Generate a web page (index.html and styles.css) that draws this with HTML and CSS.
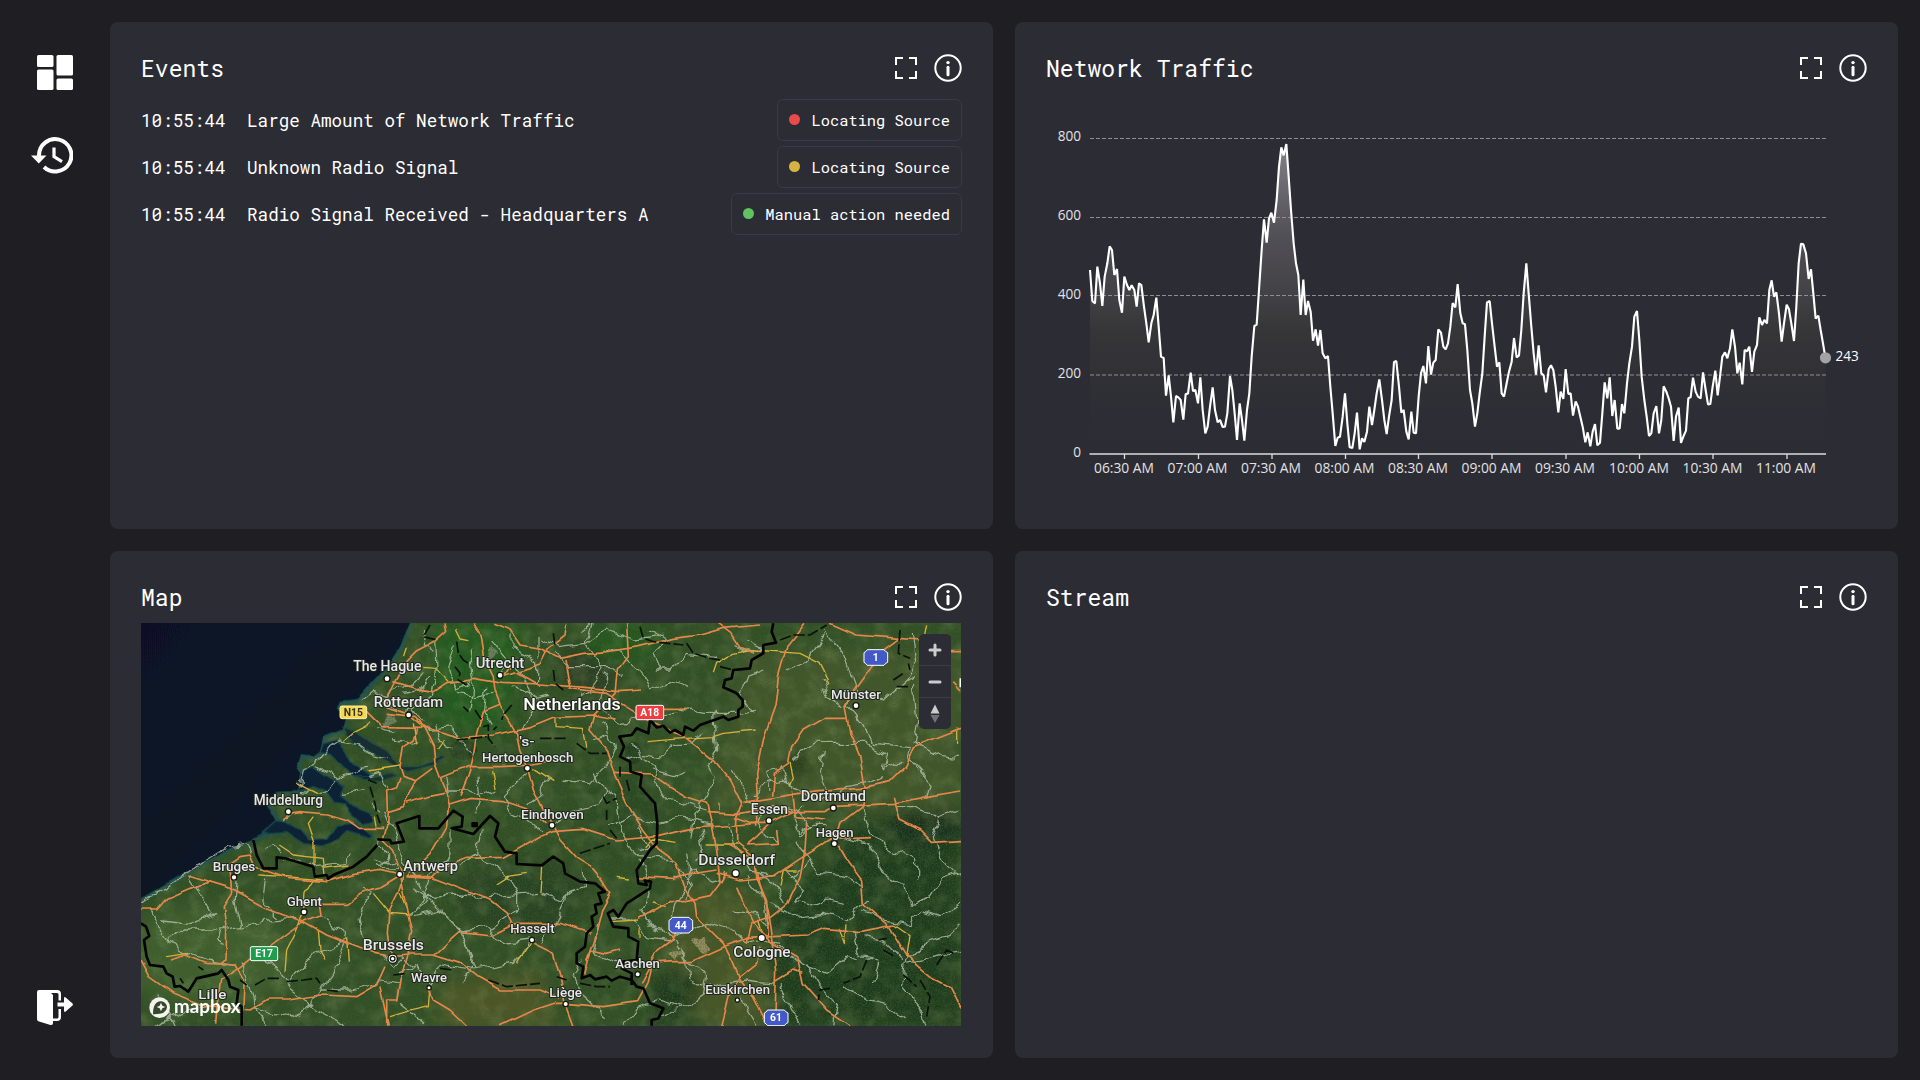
FILE: index.html
```html
<!DOCTYPE html>
<html lang="en">
<head>
<meta charset="utf-8">
<title>Dashboard</title>
<link rel="stylesheet" href="styles.css">
</head>
<body>
<svg class="defs" width="0" height="0" aria-hidden="true">
  <symbol id="expand" viewBox="0 0 22 22"><path d="M1 8V1H8M14 1h7V8M21 14v7H14M8 21H1V14" fill="none" stroke="currentColor" stroke-width="2"/></symbol>
  <symbol id="info" viewBox="0 0 28 28"><circle cx="14" cy="14" r="12.700" fill="none" stroke="currentColor" stroke-width="2"/><circle cx="14" cy="8.600" r="1.700" fill="currentColor"/><path d="M14 13.300v7.400" stroke="currentColor" stroke-width="3" stroke-linecap="round"/></symbol>
</svg>
<div class="app">
  <nav class="sidebar">
    <svg class="nav-dashboard" width="38" height="36" viewBox="0 0 38 36" fill="#fff"><rect width="16.500" height="12" rx="1.600"/><rect y="14.500" width="16.500" height="20.500" rx="1.600"/><rect x="19.500" width="16.500" height="20.500" rx="1.600"/><rect x="19.500" y="23.500" width="16.500" height="11.500" rx="1.600"/></svg>
    <svg class="nav-history" width="42" height="37" viewBox="0 0 42 37" fill="none" stroke="#fff" stroke-width="4"><path d="M8 20V18.500A16.200 16.200 0 1 1 13 30"/><path d="M0 18.500h15.500L7.800 26.500z" fill="#fff" stroke="none"/><path d="M23 10.500v9.200l8 5" stroke-width="3.200"/></svg>
    <svg class="nav-logout" width="38" height="36" viewBox="0 0 38 36" fill="#fff"><path d="M2 0H20Q24 0 24 4V10.500H21.500V4.500Q21.500 3 20 3H14L16 5V33Q16 35.500 13.500 35L2 31.500Q0 31 0 29V2Q0 0 2 0z"/><path d="M16 28.500H20Q21.500 28.500 21.500 27V19H24V27Q24 31 20 31H16z"/><path d="M20.500 12.500H27V8.500Q27 6 29 7.700L35.500 13.500Q36.500 14.500 35.500 15.500L29 21.300Q27 23 27 20.500V16.500H20.500z"/></svg>
  </nav>
  <main class="grid">
    <section class="card">
      <header><h2>Events</h2><svg class="i-expand"><use href="#expand"/></svg><svg class="i-info"><use href="#info"/></svg></header>
      <ul class="events">
        <li><time>10:55:44</time><span class="name">Large Amount of Network Traffic</span><span class="pill"><i class="dot red"></i>Locating Source</span></li>
        <li><time>10:55:44</time><span class="name">Unknown Radio Signal</span><span class="pill"><i class="dot yellow-dot"></i>Locating Source</span></li>
        <li><time>10:55:44</time><span class="name">Radio Signal Received - Headquarters A</span><span class="pill"><i class="dot green"></i>Manual action needed</span></li>
      </ul>
    </section>
    <section class="card">
      <header><h2>Network Traffic</h2><svg class="i-expand"><use href="#expand"/></svg><svg class="i-info"><use href="#info"/></svg></header>
      <svg class="chart" width="821" height="390" viewBox="0 0 821 390">
        <defs><linearGradient id="area" gradientUnits="userSpaceOnUse" x1="0" y1="100" x2="0" y2="1030"><stop offset="0" stop-color="#a9a6ad" stop-opacity=".72"/><stop offset=".3" stop-color="#706c72" stop-opacity=".55"/><stop offset=".6" stop-color="#3c3c3a" stop-opacity=".65"/><stop offset="1" stop-color="#2b2b33" stop-opacity=".1"/></linearGradient></defs>
        <g transform="translate(-6 11) scale(.33333)"><polygon id="traffic-area" fill="url(#area)"/></g>
        <path class="gridline" d="M44 39.500H780M44 118.500H780M44 196.500H780M44 276H780"/>
        <g transform="translate(-6 11) scale(.33333)"><polyline id="traffic-line" class="line"/></g>
        <circle cx="779.500" cy="258.800" r="5.600" fill="#a3a2a7"/>
        <path class="axis" d="M43.500 355H780M78.500 355v5M152.500 355v5M226 355v5M299.500 355v5M372.500 355v5M446 355v5M520 355v5M593.500 355v5M667 355v5M741 355v5"/>
        <g class="ylab"><text x="35" y="41.500">800</text><text x="35" y="120.500">600</text><text x="35" y="199.500">400</text><text x="35" y="278.500">200</text><text x="35" y="357.500">0</text></g>
        <g class="xlab"><text x="78" y="374" textLength="60" lengthAdjust="spacingAndGlyphs">06:30 AM</text><text x="151.500" y="374" textLength="60" lengthAdjust="spacingAndGlyphs">07:00 AM</text><text x="225" y="374" textLength="60" lengthAdjust="spacingAndGlyphs">07:30 AM</text><text x="298.500" y="374" textLength="60" lengthAdjust="spacingAndGlyphs">08:00 AM</text><text x="372" y="374" textLength="60" lengthAdjust="spacingAndGlyphs">08:30 AM</text><text x="445.500" y="374" textLength="60" lengthAdjust="spacingAndGlyphs">09:00 AM</text><text x="519" y="374" textLength="60" lengthAdjust="spacingAndGlyphs">09:30 AM</text><text x="593" y="374" textLength="60" lengthAdjust="spacingAndGlyphs">10:00 AM</text><text x="666.500" y="374" textLength="60" lengthAdjust="spacingAndGlyphs">10:30 AM</text><text x="740" y="374" textLength="60" lengthAdjust="spacingAndGlyphs">11:00 AM</text></g>
        <text class="last" x="789.500" y="262">243</text>
      </svg>
    </section>
    <section class="card">
      <header><h2>Map</h2><svg class="i-expand"><use href="#expand"/></svg><svg class="i-info"><use href="#info"/></svg></header>
      <div class="map">
        <svg width="820" height="403" viewBox="3 39 2460 1209">
          <defs>
            <filter id="grain" x="0" y="0" width="100%" height="100%"><feTurbulence type="fractalNoise" baseFrequency=".22" numOctaves="3" seed="4"/><feColorMatrix values="0 0 0 0 .05  0 0 0 0 .1  0 0 0 0 .03  1.9 0 0 0 -.75"/></filter>
            <filter id="fields" x="0" y="0" width="100%" height="100%"><feTurbulence type="fractalNoise" baseFrequency=".02" numOctaves="5" seed="9"/><feColorMatrix values="0 0 0 0 .38  0 0 0 0 .47  0 0 0 0 .19  0 2.200 0 0 -.95"/></filter>
            <filter id="soft" x="-40%" y="-40%" width="180%" height="180%"><feGaussianBlur stdDeviation="26"/></filter>
            <filter id="shore" x="-10%" y="-10%" width="120%" height="120%"><feGaussianBlur stdDeviation="7"/></filter>
            <filter id="wiggle" filterUnits="userSpaceOnUse" x="3" y="39" width="2460" height="1209"><feTurbulence type="fractalNoise" baseFrequency=".022" numOctaves="2" seed="3"/><feDisplacementMap in="SourceGraphic" scale="36" xChannelSelector="R" yChannelSelector="G"/></filter>
            <filter id="bend" filterUnits="userSpaceOnUse" x="3" y="39" width="2460" height="1209"><feTurbulence type="fractalNoise" baseFrequency=".015" numOctaves="1" seed="8"/><feDisplacementMap in="SourceGraphic" scale="22" xChannelSelector="R" yChannelSelector="G"/></filter>
            <linearGradient id="deep" x1="0" y1="0" x2="1" y2="1"><stop offset="0" stop-color="#0a1128"/><stop offset=".5" stop-color="#081424"/><stop offset="1" stop-color="#102c38"/></linearGradient>
            <path id="sea" d="M-60-20H835L808 39 780 110 740 170 690 225 650 270 600 275 590 295 615 325 606 358 550 378 540 425 520 440 480 435 470 470 490 500 475 540 410 542 378 580 410 635 440 655 380 670 300 700 200 750 80 820-60 900z"/>
            <g id="inlets">
              <path d="M410 635 440 640 480 655 510 690 560 685 590 645 640 640 700 675 690 685 620 665 600 690 550 708 490 700 440 668 370 672z"/>
              <path d="M475 545 485 490 520 472 560 500 610 530 605 560 640 590 690 610 697 635 660 642 630 615 620 585 585 580 560 545 520 530z"/>
              <path d="M540 430 548 405 590 392 620 420 640 460 700 500 680 508 640 500 600 460 570 430z"/>
              <path d="M606 350 640 365 690 400 740 425 780 470 830 470 880 455 900 435 910 440 880 465 800 485 730 450 660 408 620 378z" opacity=".75"/>
              <path d="M640 500 700 500 750 485 770 495 720 512 670 508z" opacity=".6"/>
            </g>
          </defs>
          <rect x="3" y="39" width="2460" height="1209" fill="#314f25"/>
          <g filter="url(#soft)">
            <path d="M880 40 1160 40 1100 370 880 350z" fill="#1b6018" opacity=".75"/>
            <ellipse cx="1350" cy="170" rx="90" ry="80" fill="#2b3a20"/>
            <ellipse cx="1450" cy="100" rx="120" ry="60" fill="#24581f"/>
            <path d="M1820 120H2463V600H1700z" fill="#43572b"/>
            <path d="M2160 640 2463 600V1250H1900L1890 930z" fill="#1d3a1e"/>
            <path d="M1600 820 1850 850 1890 1250H1690L1560 1000z" fill="#4a5628"/>
            <path d="M1540 1100 1690 1060 1640 1250H1530z" fill="#1c371b"/>
            <path d="M900 1120 1200 1080 1250 1250H900z" fill="#4f5728"/>
            <ellipse cx="1140" cy="860" rx="200" ry="110" fill="#284221"/>
            <ellipse cx="200" cy="1040" rx="260" ry="150" fill="#41612e"/>
            <path d="M1330 500 1560 480 1540 760 1350 740z" fill="#2b4a24"/>
            <ellipse cx="1970" cy="460" rx="45" ry="35" fill="#1b3518"/>
            <path d="M2250 610 2460 600 2463 690 2260 680z" fill="#142a1a"/>
          </g>
          <g opacity=".7"><ellipse cx="970" cy="420" rx="42" ry="30" fill="#1a3419"/><ellipse cx="1480" cy="430" rx="25" ry="34" fill="#1b371b"/></g>
          <g filter="url(#wiggle)" opacity=".75"><path d="M1655 995l38-8 18 30-25 15-18-14z M1590 1028l35-8 5 15-30 8z" fill="#b5a276"/><path d="M1040 125l20-8 12 18-18 15z M720 335l50-12 10 15-50 12z" fill="#87917a"/></g>
          <rect x="3" y="39" width="2460" height="1209" filter="url(#fields)" opacity=".25"/>
          <rect x="3" y="39" width="2460" height="1209" filter="url(#grain)" opacity=".85"/>
          <use href="#sea" fill="#174650" stroke="#1f535a" stroke-width="14" filter="url(#shore)"/>
          <g filter="url(#bend)"><use href="#sea" fill="url(#deep)"/><use href="#inlets" fill="#0b2236" stroke="#1c4c4c" stroke-width="4"/></g>
          <g class="minor" filter="url(#wiggle)">
            <path d="M3 870 60 845 130 800 200 750 260 715 310 705 340 730"/><path d="M25 880 50 940 80 990 130 1020 200 1050 290 1060"/><path d="M150 800 190 860 220 910"/><path d="M285 810 280 870 300 950 240 960 232 990 260 1000"/><path d="M380 800 370 890 410 920"/><path d="M300 955 380 930 470 925"/><path d="M480 530 490 480 530 460 540 430 600 390 650 400 690 430 740 440"/><path d="M530 470 590 505 650 480 690 475"/><path d="M445 610 430 640M480 545 550 550 580 515"/><path d="M660 270 700 240 740 260 770 230 820 225 850 190"/><path d="M890 100 895 190 880 250 820 300 850 340"/><path d="M940 100 920 180 950 240 1010 210"/><path d="M990 110 1000 210 990 310"/><path d="M1110 60 1110 110 1190 150 1190 220"/><path d="M1200 80 1200 140"/><path d="M850 360 930 350 960 400 1000 430"/><path d="M880 340 900 400 940 410"/><path d="M1110 150 1160 220 1180 290 1150 360"/><path d="M920 540 980 540 1020 560 1060 540M920 500 930 560M1020 500 1025 570 1010 610M1160 490 1090 560 1110 610 1210 660"/><path d="M740 530 720 490 690 500M750 380 830 400M700 350 760 360"/><path d="M690 580 720 610M600 550 670 540"/><path d="M740 605 770 680 790 740 860 860 950 950 1010 1080"/><path d="M930 660 930 730 870 800 850 860 810 920"/><path d="M1010 730 1090 790 1130 850 1130 910"/><path d="M850 860 960 855 1050 860 1200 850"/><path d="M660 840 690 850 660 920 680 1010 700 1020"/><path d="M810 920 900 900 960 960 1060 950 1130 900"/><path d="M960 960 1000 1070 960 1110"/><path d="M1000 1080 1120 1060 1180 990"/><path d="M540 920 600 960 620 990 560 1020 500 1050 440 1120 400 1060"/><path d="M430 1120 480 1160 530 1200 620 1247"/><path d="M620 1000 590 1070 540 1140 500 1200"/><path d="M340 1020 400 1060M300 1060 340 1180 380 1247"/><path d="M540 1140 640 1140 720 1110 780 1120"/><path d="M350 1200 450 1220 520 1180"/><path d="M820 1060 870 1120 900 1060 1000 1080"/><path d="M780 1180 830 1220 860 1247M40 1247 120 1210 200 1190M60 1160 100 1247"/>
            <path d="M700 740 740 760 770 750 780 780 740 780 710 760M720 690 740 740 720 770M860 60 850 110 880 130M870 200 840 240 790 250M1060 100 1100 150 1080 190M950 250 1000 260 1060 250M1040 230 1030 300 1060 350M1120 230 1180 260 1230 250M720 260 760 300 820 290M440 740 530 770 620 760 630 730M370 720 400 710 430 730M60 930 150 940 230 910M230 960 130 960 80 990M820 830 860 860 830 900M730 1040 760 1070 790 1040 820 1070 780 1090M1020 660 1010 730 960 760M1210 850 1260 870 1290 850M1050 950 1090 1000 1180 990"/>
            <path d="M1210 90 1250 110 1340 100 1400 60 1480 90 1560 80"/><path d="M1330 60 1360 40 1340 100 1390 180 1350 240 1320 250"/><path d="M1390 120 1440 130 1500 180 1530 240 1600 210 1650 230"/><path d="M1240 130 1290 170 1350 170 1410 170 1450 200"/><path d="M1550 180 1590 180 1640 130 1730 140"/><path d="M1400 190 1380 290 1440 340 1520 310 1620 310"/><path d="M1620 300 1700 310 1800 310 1850 300"/><path d="M1720 300 1730 420 1700 460"/><path d="M1840 310 1800 250 1820 200 1870 180"/><path d="M2060 60 2110 130 2150 240 2120 280 2160 330"/><path d="M2010 140 2060 70M2010 140 1990 160 1940 180M2150 250 2230 270 2300 210 2330 200"/><path d="M2300 210 2330 160 2320 60"/><path d="M2320 220 2330 330 2320 400 2400 440 2463 445"/><path d="M2150 310 2200 400 2310 410 2300 440 2370 520 2360 570"/><path d="M1960 450 2020 400 2080 400 2180 400 2240 430 2230 480"/><path d="M1450 450 1500 430 1560 440 1600 400 1660 400 1690 370"/><path d="M1480 400 1500 440 1540 470 1560 540 1580 570 1700 600"/><path d="M1700 460 1720 500 1700 560 1660 620 1650 680"/><path d="M1360 490 1370 520 1430 560 1440 640 1460 700 1500 740 1600 750"/><path d="M1260 510 1350 520 1400 470 1430 400 1400 370"/><path d="M1400 650 1480 620 1560 640 1620 620 1720 640"/><path d="M1840 560 1880 520 1930 510 1950 530 2010 560 2080 560"/><path d="M1860 600 1850 640 1880 680 1920 700"/><path d="M1990 590 1960 620 1980 680 2020 640 2060 640"/><path d="M2090 570 2120 530 2180 520 2230 500"/><path d="M2270 590 2320 590 2400 620 2450 600"/><path d="M2160 590 2190 660 2250 720 2330 750 2330 800"/><path d="M2400 620 2380 680 2400 740 2450 790"/><path d="M2110 680 2180 700 2230 790 2300 830 2310 880 2370 860 2400 810 2463 790"/><path d="M1990 720 2040 790 2120 800 2170 830"/><path d="M1930 780 1990 830 1960 880 2010 890 2060 870 2120 880"/><path d="M1890 880 1960 920 2050 910 2120 930 2180 870"/><path d="M2170 900 2240 940 2310 950 2340 900 2400 920 2463 880"/><path d="M2140 960 2160 1040 2220 1050 2200 1120"/><path d="M1900 1000 1980 1060 2060 1090 2120 1040 2160 1050"/><path d="M2000 1060 2040 1130 2090 1180 2080 1247"/><path d="M2300 1050 2350 1000 2420 980 2463 940"/><path d="M2300 1060 2380 1040 2463 1020M2300 1050 2290 1130 2350 1200 2360 1247"/><path d="M1600 800 1660 780 1740 820 1760 780M1640 730 1650 820 1610 880 1600 920"/><path d="M1500 750 1530 820 1500 900 1550 960 1600 980"/><path d="M1410 930 1480 930 1520 980 1600 990 1640 1060 1700 1090"/><path d="M1640 1050 1650 1110 1700 1130 1740 1120 1820 1110 1900 1120"/><path d="M1600 980 1700 940 1780 960 1820 1000 1870 990 1920 1000"/><path d="M1700 1090 1690 1160 1640 1190 1590 1200 1540 1230"/><path d="M1800 1130 1820 1200 1850 1247M1920 1120 1960 1200 1990 1247"/><path d="M1850 780 1900 820 1930 880M1820 800 1870 860 1880 940"/><path d="M1770 640 1790 720 1830 780 1900 790"/><path d="M1330 770 1330 830 1280 850 1250 940 1200 1000"/><path d="M1240 640 1300 600 1380 580 1400 540"/><path d="M1380 940 1360 1030 1430 1060 1500 1070"/><path d="M1450 1247 1490 1190 1560 1170 1620 1190M1320 1050 1300 1100 1330 1160 1400 1220"/><path d="M1490 660 1520 700 1500 720M1230 500 1200 560 1160 590"/>
            <path d="M1560 180 1540 130 1580 90 1530 60M1780 110 1830 130 1860 110 1820 90M1350 390 1400 370 1390 340M1890 540 1880 480 1930 470 1940 520M1780 480 1820 560 1850 600M1970 700 2010 750 1950 810M1620 770 1660 830 1640 870M2040 200 2060 260 2110 290M2050 420 2040 480 2060 540M2230 480 2290 450M1930 590 1970 600 2010 650 1980 670M2180 980 2240 1000 2290 1050M1780 900 1850 910 1880 950M1530 480 1600 500 1640 480M2110 1130 2180 1170 2240 1180 2300 1230M1680 650 1690 720 1660 760"/>
          </g>
          <g class="yellow" filter="url(#bend)">
            <path d="M800 110 790 140M945 60 960 90 985 95M850 175 890 178 925 215M690 335 680 350 640 370 610 395M680 480 780 465M910 390 890 420M1055 480 1065 540M415 705 460 735 550 745 555 800M520 620 505 640 525 700 525 800M355 795 440 800 550 810M550 775 625 765M520 810 495 850 490 910 465 970 440 1020 435 1090M535 960 540 1020 555 1045M620 985 625 1055M75 1040 150 1030M700 850 750 910 810 915M1205 770 1200 850M1180 475 1240 515M1175 990 1130 1060M1100 800 1160 790M1070 825 1110 800M870 1130 865 1190 800 1205 750 1220M780 850 800 900M820 340 830 400M470 520 530 550M700 620 705 650"/>
            <path d="M1245 320 1245 350 1330 355 1340 410M1850 360 1750 370 1720 380 1640 385 1520 395M1720 190 1730 160 1780 130 1840 120 1980 130 2040 160 2070 220M2360 40 2350 90M1520 710 1540 690 1600 700M1410 935 1500 930M1500 955 1500 980M1540 875 1580 890M1700 705 1790 705M1920 830 1930 780 1970 780M1950 455 1960 500 1950 530M2095 955 2110 1000 2115 940M2260 945 2310 980 2300 1045M1740 580 1740 600M1430 805 1470 810M1850 930 1860 970M2450 360 2450 400"/>
          </g>
          <g class="roads" filter="url(#bend)">
            <path d="M915 40 920 65 880 100 830 125 800 155 770 210 745 260 740 290 800 310 850 350"/><path d="M1000 40 1020 75 1030 140 1060 200 1065 240 1080 280 1100 320 1130 370 1140 430 1165 480 1180 540 1215 610 1235 640 1260 690 1310 745 1350 770 1385 810 1412 850 1385 900 1370 960 1340 1050"/><path d="M760 215 830 235 880 245 920 218 1000 205 1090 220 1200 225 1330 235 1440 245 1500 240"/><path d="M1060 40 1110 60 1140 105 1200 115 1260 145 1330 130 1400 125 1500 110 1600 85 1680 75 1750 55 1860 45"/><path d="M1030 140 1110 170 1090 200 1200 165 1225 115 1275 75 1280 40"/><path d="M740 310 830 320 850 350 880 410 885 460 915 540 925 590 920 650 880 720 830 770 800 800"/><path d="M680 305 725 350 850 352 960 383 1060 375 1170 350 1240 322 1360 318 1430 330"/><path d="M1080 280 1030 300 1010 370 1000 440 985 500 960 560"/><path d="M830 355 820 390 790 410 780 470 790 500 830 512 880 475"/><path d="M780 500 770 530 740 540 742 600 740 650 730 690 760 720 790 790 775 850 750 900 745 970 755 1040"/><path d="M830 512 790 590 740 605M800 580 860 560 910 550"/><path d="M445 610 480 605 560 612 620 630 655 655 730 655M445 610 430 635"/><path d="M900 505 985 470 1080 470 1180 465 1250 450M925 585 990 565 1090 572 1170 600 1215 640"/><path d="M800 800 870 800 960 835 1050 870 1100 910 1130 970"/><path d="M3 900 50 900 80 865 150 835 215 815"/><path d="M145 795 260 830 370 890 490 935 560 975 620 1000 700 1030 755 1040 800 1035 880 1035 960 1060 1010 1100 1080 1140 1200 1140 1260 1165"/><path d="M270 760 300 740 330 735 345 770 440 805 560 815 640 790 720 778 780 792"/><path d="M270 770 275 850 250 890 260 960 258 1050 240 1060"/><path d="M490 935 540 915 535 880 620 880 660 850 720 830 770 800"/><path d="M490 935 440 970 400 1000 350 1035 285 1085 245 1110 235 1180 230 1247"/><path d="M3 1050 30 1100 100 1150 200 1190 330 1200 380 1170 450 1170 540 1155 650 1160 710 1125 735 1070"/><path d="M90 1050 140 1035 200 1060 285 1065 310 1110 305 1200"/><path d="M780 800 800 900 815 960 800 1040 780 1110 770 1170 740 1170 740 1247M720 1130 745 1247"/><path d="M800 800 870 805 900 775 980 745 1090 742 1130 720 1200 680 1235 665 1330 658 1430 690 1550 680 1650 655 1790 645 1850 640"/><path d="M885 1035 920 1000 960 965 1060 975 1130 940 1260 940 1350 970"/><path d="M860 1130 880 1170 930 1200 980 1247M1080 1247 1180 1200 1240 1180 1275 1180 1390 1190 1490 1175 1520 1120 1530 1080 1530 1060 1600 1055 1650 1055 1750 1010 1820 985 1900 980"/><path d="M1180 1000 1240 1030 1260 1100 1275 1180 1300 1247"/>
            <path d="M1200 230 1130 190M1735 40 1775 70 1800 110 1840 130M1460 40 1465 140 1435 180 1428 250 1360 320 1350 360 1400 420 1425 500 1460 580 1510 660 1555 720 1610 760 1635 830 1665 880 1670 920 1710 960 1750 1000 1780 1060 1800 1110 1840 1160 1880 1240"/><path d="M1275 150 1290 240 1400 250 1460 290 1540 340 1630 380 1680 420 1730 460 1770 510 1805 580 1790 620 1790 700 1840 740 1860 820 1885 900 1900 1000 1970 1040 1990 1120 2060 1200 2130 1247"/><path d="M1995 40 1940 110 1915 200 1905 290 1870 390 1850 490 1855 560 1845 585"/><path d="M2070 40 2150 75 2280 85 2240 115 2190 170 2140 240 2115 290 2130 370 2160 440 2175 530 2165 590 2100 640 2085 690"/><path d="M2280 85 2340 90M2430 125 2463 125M2440 215 2463 240"/><path d="M2463 355 2320 410 2295 470 2250 515 2160 535 2030 545 1940 560 1810 580"/><path d="M1700 605 1800 610 1900 590 1960 605 2050 605 2080 590 2260 580 2360 560 2463 543"/><path d="M2120 325 2050 325 1990 360 1955 410 1945 460 1900 490 1895 560"/><path d="M1420 490 1540 495 1590 530 1640 560 1700 580 1715 640 1730 720 1740 820 1710 860 1640 875 1590 875 1530 910 1500 925"/><path d="M1490 800 1600 805 1630 795 1730 780M1730 790 1800 810 1900 800 1990 740 2080 685 2190 680"/><path d="M2085 690 2120 750 2165 810 2170 880 2240 940 2300 1040 2370 1100 2430 1130 2463 1195"/><path d="M1900 980 2000 975 2050 955 2160 965 2260 945"/><path d="M1330 1100 1350 1020 1400 1030 1440 1020M1500 1120 1550 1030 1600 990 1610 950"/><path d="M1790 830 1820 900 1850 960 1900 1000 1910 1080 1905 1200"/><path d="M2260 560 2280 630 2340 660 2380 700 2463 695"/><path d="M2000 640 1995 720 1980 800 1940 880 1890 920 1830 940 1815 1000"/><path d="M1785 620 1840 640 1890 640 1960 605M1910 660 1915 700 1820 705 1850 680 1890 640M1750 700 1830 740M1745 820 1760 790"/><path d="M1745 1247 1770 1150 1800 1100 1850 1060 1860 1010M1570 298 1640 298M1845 740 1850 800 1880 870 1885 980M1850 600 1850 650M1960 545 1970 620 2050 630M1910 1110 1960 1080 1990 1090"/>
          </g>
          <g class="local"><path d="M870 45 850 80 890 90M950 95 955 130 970 150 985 160M945 170 960 190 955 210 980 225M970 290 985 305M1005 300 1025 330M1115 285 1090 315 1085 330M1030 350 1045 345 1045 385 1065 410M1070 350 1060 360M685 510 710 520M690 530 705 580 710 610 720 640M950 390 1040 380M120 1105 130 1120M175 1070 190 1080M300 1110 320 1125M345 1125 380 1105 420 1105M440 1115 490 1110 530 1105 540 1120M560 1140 600 1145M760 1095 800 1090M900 1075 940 1080M1045 1110 1100 1130 1200 1120M1240 70 1245 110M1500 50 1510 85 1540 95 1630 105M1640 100 1660 130 1710 145 1740 150M1740 170 1780 180M1920 90 1960 75 2010 75 2060 45M2280 60 2275 130 2310 145M2305 160 2310 180M2260 210 2290 190M2270 230 2310 230M1240 180 1245 220 1270 240M1200 385 1280 385M1310 400 1350 430 1400 430M1440 470 1440 500M1460 510 1470 550M1390 560 1400 580 1430 565M1400 600 1400 630M1410 660 1430 685M1320 730 1350 720 1410 700M2215 990 2240 985M2230 1020 2265 1040M2180 1050 2160 1100 2110 1120M2070 1135 2040 1140 2035 1170M2290 1095 2330 1130M2340 1110 2370 1160 2360 1220M2390 1065 2420 1020 2440 1030M1320 1120 1370 1130 1410 1130M1250 1100 1280 1110"/></g>
          <g class="border">
            <path d="M340 690 350 735 370 775 410 775 410 742 435 745 520 770 525 800 560 795 565 806 580 795 640 770 680 740 712 705"/><path d="M712 688 750 690 755 700 792 695 770 640 838 618 838 655 895 655 940 602 968 620 965 650 935 655 1000 672 1050 618 1075 640 1065 680 1095 725 1130 730 1130 762 1205 766 1240 740 1270 760 1275 790 1320 815 1365 820 1395 845 1375 850 1385 880 1365 885 1370 910 1355 920 1360 950 1340 970 1335 1010 1310 1030 1310 1060 1330 1070 1325 1105 1350 1095 1365 1108 1400 1100 1415 1112 1440 1100 1475 1110 1490 1130 1510 1135 1530 1180 1570 1195 1555 1225 1535 1230 1535 1247"/><path d="M1900 40 1895 65 1908 98 1870 105 1870 130 1835 150 1830 175 1780 180 1775 205 1755 210 1750 232 1790 250 1808 270 1808 290 1795 300 1795 320 1765 330 1750 320 1680 345 1660 362 1635 350 1630 375 1605 360 1590 368 1570 348 1550 352 1530 330 1525 370 1490 355 1475 375 1438 380 1452 410 1440 440 1470 455 1472 485 1505 495 1500 530 1545 580 1552 640 1550 700 1530 720 1490 780 1495 820 1520 825 1515 812 1533 815 1530 835 1460 880 1435 920 1420 900 1403 910 1420 950 1465 955 1465 980 1495 995 1490 1050 1450 1055 1445 1075 1475 1090 1475 1125"/><path d="M3 940 18 950 28 978 12 990 20 1040 30 1065 70 1070 80 1090 98 1100 104 1130 120 1128 145 1145 170 1105 235 1090 245 1080 265 1110 270 1130 295 1140 290 1180 305 1190 305 1247"/><path d="M998 640h12v8h-12z"/>
          </g>
          <g class="towns"><circle cx="741" cy="206" r="9"/><circle cx="1080" cy="196" r="9"/><circle cx="806" cy="315" r="9"/><circle cx="1162" cy="475" r="9"/><circle cx="445" cy="605" r="9"/><circle cx="1236" cy="646" r="9"/><circle cx="282" cy="802" r="8.500"/><circle cx="779" cy="793" r="9"/><circle cx="492" cy="906" r="9"/><circle cx="758" cy="1046" r="14"/><circle cx="758" cy="1046" r="7"/><circle cx="1176" cy="990" r="8"/><circle cx="867" cy="1133" r="6.500"/><circle cx="1277" cy="1182" r="8"/><circle cx="1493" cy="1093" r="8"/><circle cx="2148" cy="287" r="9"/><circle cx="2080" cy="594" r="9"/><circle cx="1887" cy="632" r="9"/><circle cx="2083" cy="701" r="9"/><circle cx="1787" cy="790" r="11"/><circle cx="1865" cy="984" r="11"/><circle cx="1792" cy="1170" r="6.500"/></g>
          <g class="names">
            <text x="742" y="184" textLength="205" lengthAdjust="spacingAndGlyphs">The Hague</text><text x="1080" y="174" textLength="146" lengthAdjust="spacingAndGlyphs">Utrecht</text><text x="805" y="292" textLength="208" lengthAdjust="spacingAndGlyphs">Rotterdam</text><text class="country" x="1296" y="299" textLength="292" lengthAdjust="spacingAndGlyphs">Netherlands</text><text class="sm" x="1161" y="408" textLength="46" lengthAdjust="spacingAndGlyphs">'s-</text><text class="sm" x="1163" y="455" textLength="274" lengthAdjust="spacingAndGlyphs">Hertogenbosch</text><text x="445" y="586" textLength="208" lengthAdjust="spacingAndGlyphs">Middelburg</text><text class="sm" x="1237" y="626" textLength="188" lengthAdjust="spacingAndGlyphs">Eindhoven</text><text class="sm" x="282" y="782" textLength="128" lengthAdjust="spacingAndGlyphs">Bruges</text><text x="872" y="782" textLength="164" lengthAdjust="spacingAndGlyphs">Antwerp</text><text class="sm" x="493" y="887" textLength="106" lengthAdjust="spacingAndGlyphs">Ghent</text><text class="lg" x="760" y="1019" textLength="184" lengthAdjust="spacingAndGlyphs">Brussels</text><text class="sm" x="1177" y="970" textLength="133" lengthAdjust="spacingAndGlyphs">Hasselt</text><text class="sm" x="867" y="1115" textLength="108" lengthAdjust="spacingAndGlyphs">Wavre</text><text class="sm" x="217" y="1168" textLength="84" lengthAdjust="spacingAndGlyphs">Lille</text><text class="sm" x="1277" y="1161" textLength="98" lengthAdjust="spacingAndGlyphs">Liège</text><text class="sm" x="1493" y="1074" textLength="134" lengthAdjust="spacingAndGlyphs">Aachen</text><text class="sm" x="2148" y="268" textLength="150" lengthAdjust="spacingAndGlyphs">Münster</text><text x="2080" y="573" textLength="196" lengthAdjust="spacingAndGlyphs">Dortmund</text><text x="1888" y="612" textLength="112" lengthAdjust="spacingAndGlyphs">Essen</text><text class="sm" x="2084" y="682" textLength="114" lengthAdjust="spacingAndGlyphs">Hagen</text><text class="lg" x="1790" y="766" textLength="230" lengthAdjust="spacingAndGlyphs">Dusseldorf</text><text class="lg" x="1866" y="1040" textLength="172" lengthAdjust="spacingAndGlyphs">Cologne</text><text class="sm" x="1793" y="1152" textLength="194" lengthAdjust="spacingAndGlyphs">Euskirchen</text>
            <path d="M2461 205V232" stroke="#fff" stroke-width="5"/>
          </g>
          <g class="shields"><rect x="600" y="288" width="80" height="38" rx="6" fill="#f6d854" stroke="#fff3a8"/><text x="640" y="318" fill="#33301c">N15</text><rect x="331" y="1010" width="82" height="42" rx="5" fill="#1f9d4d" stroke="#fff"/><text x="372" y="1041">E17</text><rect x="1488" y="286" width="83" height="43" rx="5" fill="#f03b40" stroke="#fff"/><text x="1529" y="318">A18</text>
            <g fill="#4459c8" stroke="#fff"><path id="bundes" d="M2182 119H2232Q2237 126 2243 128V157Q2237 158 2232 166H2182Q2177 159 2172 157V128Q2178 126 2182 119z"/><use href="#bundes" x="-585" y="803"/><use href="#bundes" x="-299" y="1081"/></g>
            <text x="2207" y="153">1</text><text x="1622" y="956">44</text><text x="1908" y="1234">61</text></g>
          <g class="brand"><circle cx="59" cy="1193" r="31" fill="#f3f3ef"/><path d="M39 1213Q39 1175 62 1174A18 18 0 0 1 81 1192Q80 1214 39 1213z" fill="#35482c"/><path d="M63 1178 67 1187 76 1191 67 1195 63 1204 59 1195 50 1191 59 1187z" fill="#f3f3ef"/><text x="102" y="1208" textLength="200" lengthAdjust="spacingAndGlyphs">mapbox</text></g>
        </svg>
        <div class="controls">
          <button aria-label="Zoom in"><svg width="14" height="14"><path d="M7 2v10M2 7h10" stroke="#ccc" stroke-width="3" stroke-linecap="round"/></svg></button>
          <button aria-label="Zoom out"><svg width="14" height="14"><path d="M2 7h10" stroke="#ccc" stroke-width="3" stroke-linecap="round"/></svg></button>
          <button aria-label="Reset north"><svg width="10" height="20"><path d="M5 .5 9.500 9.500H.5z" fill="#ccc"/><path d="M5 19 9.500 11H.5z" fill="#72727a"/></svg></button>
        </div>
      </div>
    </section>
    <section class="card">
      <header><h2>Stream</h2><svg class="i-expand"><use href="#expand"/></svg><svg class="i-info"><use href="#info"/></svg></header>
    </section>
  </main>
</div>
<script src="chart.js"></script>
</body>
</html>
```
FILE: chart.js
```js
// One sample a minute; each pair is x,y in the chart's own units, with the axis at y = 1031.
const trace = `150,480 157,573 165,580 172,470 180,520 187,588 194,500 202,460 209,409 216,420 223,495 231,477 238,570 246,608 253,500 261,525 268,540 275,526 283,540 290,590 297,520 304,525 312,590 319,640 326,697 334,640 341,615 349,563 356,650 363,740 371,744 378,857 386,796 393,860 400,937 408,858 415,862 422,870 430,929 437,852 444,851 452,788 459,843 466,840 474,880 481,802 488,900 496,970 503,950 510,890 518,832 525,900 533,937 540,930 548,951 555,950 562,910 570,798 577,840 584,910 591,990 599,880 606,930 613,992 621,900 628,850 635,740 643,648 650,644 657,540 665,420 672,328 680,398 687,325 694,308 702,338 710,270 717,170 724,112 731,136 739,102 746,200 753,300 761,400 768,460 775,495 782,615 790,509 797,615 804,573 812,605 819,692 827,658 834,707 841,660 848,730 856,745 864,738 871,830 878,910 886,1008 893,983 900,980 908,920 915,850 922,940 929,1012 937,1014 944,970 951,908 959,1018 966,985 973,996 981,965 988,890 996,945 1003,900 1010,850 1018,808 1026,870 1033,930 1040,972 1047,920 1055,870 1062,756 1069,753 1077,830 1084,908 1091,900 1099,965 1106,988 1114,905 1121,968 1128,970 1136,860 1143,790 1150,768 1158,820 1165,708 1173,794 1180,758 1187,750 1195,658 1203,668 1210,710 1217,718 1224,700 1231,650 1238,579 1246,592 1253,522 1261,610 1268,640 1275,643 1282,720 1290,840 1297,880 1305,950 1312,910 1319,850 1327,790 1334,680 1341,577 1349,573 1356,640 1364,710 1371,770 1378,757 1385,850 1392,860 1400,820 1407,785 1415,755 1422,684 1430,742 1437,736 1444,660 1451,550 1459,460 1466,550 1474,650 1481,730 1488,794 1496,706 1504,790 1511,796 1518,847 1526,778 1533,766 1540,780 1547,830 1555,907 1562,845 1570,867 1577,777 1585,852 1592,850 1599,917 1607,874 1614,890 1621,920 1628,950 1636,997 1643,967 1651,1009 1658,965 1665,942 1672,1006 1680,998 1687,910 1694,817 1702,865 1709,802 1717,918 1724,870 1732,956 1739,955 1746,882 1753,910 1761,820 1768,760 1776,710 1783,620 1791,603 1798,690 1805,800 1813,870 1820,920 1827,978 1834,970 1841,910 1849,888 1857,970 1864,930 1871,829 1879,845 1886,865 1893,890 1901,993 1908,920 1916,893 1923,999 1930,980 1938,962 1945,865 1952,862 1959,803 1967,845 1974,860 1982,865 1989,787 1997,840 2004,883 2011,882 2018,830 2026,782 2033,856 2040,800 2047,740 2055,727 2062,745 2070,715 2077,658 2085,710 2092,790 2099,758 2107,823 2114,720 2121,724 2128,710 2136,786 2143,725 2151,705 2158,622 2166,645 2173,630 2181,640 2188,540 2195,511 2202,560 2209,547 2217,610 2225,695 2232,640 2240,584 2247,598 2254,640 2262,693 2269,590 2276,460 2283,401 2290,403 2298,430 2306,507 2313,478 2320,550 2327,626 2335,617 2342,660 2349,700 2356,742`;
document.getElementById("traffic-line").setAttribute("points", trace);
document.getElementById("traffic-area").setAttribute("points", `150,1031 ${trace} 2356,1031`);
```
FILE: styles.css
```css
* { box-sizing: border-box; }
body { margin: 0; background: #1f1e23; color: #fff; font-family: "Roboto Mono", "Liberation Mono", monospace; }
svg { display: block; flex: none; }
.defs { position: absolute; }
.app { display: flex; height: 1080px; }
.sidebar { width: 110px; padding: 55px 0 54px 31px; display: flex; flex-direction: column; align-items: flex-start; }
.nav-dashboard { margin-left: 6px; }
.nav-history { margin-top: 46px; }
.nav-logout { margin-top: auto; margin-left: 6px; }
.grid { flex: 1; display: grid; grid-template-columns: 1fr 1fr; grid-template-rows: 1fr 1fr; gap: 22px; padding: 22px 22px 22px 0; }
.card { background: #2c2c35; border-radius: 8px; padding: 31px; min-width: 0; min-height: 0; }
.card header { display: flex; align-items: center; height: 30px; margin-bottom: 11px; }
h2 { flex: 1; margin: 0; font-size: 23.05px; font-weight: 400; line-height: 30px; }
.i-expand { width: 22px; height: 22px; margin-right: 17px; }
.i-info { width: 28px; height: 28px; }

.events { list-style: none; margin: 0; padding: 5px 0 0; display: flex; flex-direction: column; gap: 6px; }
.events li { display: flex; align-items: center; height: 41px; font-size: 17.63px; }
.events time, .name { padding-top: 2px; }
.events time { width: 106px; }
.name { flex: 1; }
.pill { display: flex; align-items: center; gap: 11.5px; height: 42px; padding: 0 11px 0 10.5px; border: 1px solid #3a3a44; border-radius: 6px; font-size: 15.4px; }
.dot { width: 11px; height: 11px; border-radius: 50%; }
.red { background: #e94b4b; }
.yellow-dot { background: #d5b53f; }
.green { background: #5fc35f; }

.chart { margin-top: 16px; font-family: "Open Sans", "Noto Sans", sans-serif; font-size: 14px; font-weight: 500; fill: #e2e2e3; }
.gridline { fill: none; stroke: #8f8f92; stroke-width: 1.2; stroke-dasharray: 4 2; }
.line { fill: none; stroke: #fff; stroke-width: 6.4; stroke-linejoin: bevel; }
.axis { fill: none; stroke: #dcdcdc; stroke-width: 1.3; }
.ylab { text-anchor: end; font-size: 13.6px; }
.xlab { text-anchor: middle; }
.last { fill: #fff; font-size: 13.6px; }

.map { position: relative; width: 820px; height: 403px; overflow: hidden; }
.minor, .yellow, .roads, .local, .border { fill: none; stroke-linejoin: round; }
.minor { stroke: #bcc7b2; stroke-width: 3.8; opacity: .76; }
.yellow { stroke: #d7af3c; stroke-width: 4; }
.roads { stroke: #e6874a; stroke-width: 5; }
.local { stroke: #0b110b; stroke-width: 5; stroke-dasharray: 34 9; }
.border { stroke: #020302; stroke-width: 8; }
.towns { fill: #fff; stroke: #15180f; stroke-width: 4; }
.names { font-family: Roboto, sans-serif; font-size: 43px; font-weight: 500; text-anchor: middle; fill: #e8e8ea; }
.names text { stroke: #20251c; stroke-width: 6; paint-order: stroke; stroke-linejoin: round; }
.names .sm { font-size: 40px; }
.names .lg { font-size: 46px; }
.names .country { font-size: 49px; fill: #fff; }
.shields { font-family: Roboto, sans-serif; font-size: 31px; font-weight: 700; text-anchor: middle; fill: #fff; stroke-width: 3; }
.shields text { stroke: none; }
.brand text { font-family: Lato, sans-serif; font-size: 55px; font-weight: 700; fill: #fff; }
.controls { position: absolute; top: 11px; right: 10px; width: 32px; height: 95px; border-radius: 5px; background: #2c2c35; display: flex; flex-direction: column; overflow: hidden; }
.controls button { flex: 1; display: flex; align-items: center; justify-content: center; padding: 0; border: 0; background: none; }
.controls button + button { border-top: 1px solid #3d3d46; }
```
